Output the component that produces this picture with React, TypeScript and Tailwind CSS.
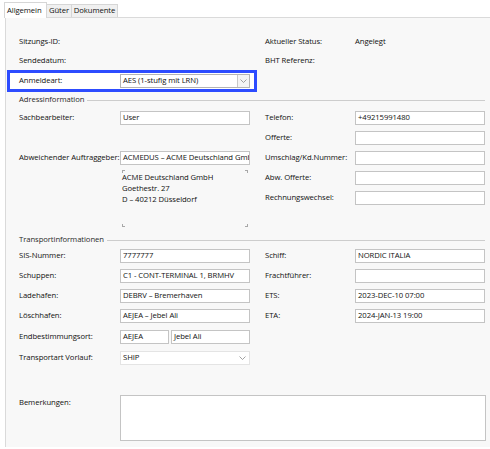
import React from "react";

function Chevron() {
  return (
    <svg width="7" height="4" viewBox="0 0 7 4" className="block">
      <path d="M0.5 0.5 L3.5 3.5 L6.5 0.5" fill="none" stroke="#8a8a8a" strokeWidth="0.8" />
    </svg>
  );
}

function Input({ value = "", w = "w-[130px]" }: { value?: string; w?: string }) {
  return (
    <div className={`h-[14px] ${w} shrink-0 border border-[#c4c4c4] bg-white flex items-center px-[2px] leading-none whitespace-nowrap overflow-hidden`}>
      {value}
    </div>
  );
}

function Row({ label, lw = "w-[101px]", h = "h-[20px]", children }: { label: string; lw?: string; h?: string; children?: React.ReactNode }) {
  return (
    <div className={`flex items-center ${h}`}>
      <div className={`${lw} shrink-0 whitespace-nowrap`}>{label}</div>
      {children}
    </div>
  );
}

function Header({ title, cls = "" }: { title: string; cls?: string }) {
  return (
    <div className={`flex items-center gap-[3px] h-[16px] pr-[5px] text-[#2a2a2a] ${cls}`}>
      <span className="whitespace-nowrap">{title}</span>
      <div className="flex-1 border-t border-[#cdcdcd]" />
    </div>
  );
}

function Corner({ pos }: { pos: string }) {
  return <div className={`absolute w-[3px] h-[3px] border-[#a8a8a8] ${pos}`} />;
}

export default function App() {
  return (
    <div className="w-[490px] h-[449px] bg-white overflow-hidden font-['Open_Sans',sans-serif] text-[7.7px] tracking-[-0.08px] text-[#111111]">
      {/* Tabs */}
      <div className="flex items-end h-[17px] pl-[4px]">
        <div className="h-[16px] w-[43px] bg-white border border-b-0 border-[#d6d6d6] flex items-center pl-[2px] pt-[1px] relative top-[1px] z-10">Allgemein</div>
        <div className="h-[13px] w-[25px] bg-[#f0f0f0] border border-b-0 border-l-0 border-[#d6d6d6] flex items-center justify-center">Güter</div>
        <div className="h-[13px] w-[46px] bg-[#f0f0f0] border border-b-0 border-l-0 border-[#d6d6d6] flex items-center justify-center">Dokumente</div>
      </div>

      {/* Panel */}
      <div className="ml-[5px] h-[430px] bg-[#f8f8f8] border-t border-l border-[#dadada]">
        <div className="pt-[14px]">
          <div className="pl-[13px] flex">
            <div className="w-[246px] shrink-0">
              <Row label="Sitzungs-ID:" h="h-[19px]" />
              <Row label="Sendedatum:" h="h-[19px]" />
            </div>
            <div className="w-[220px]">
              <Row label="Aktueller Status:" lw="w-[90px]" h="h-[19px]">
                <span>Angelegt</span>
              </Row>
              <Row label="BHT Referenz:" lw="w-[90px]" h="h-[19px]" />
            </div>
          </div>

          {/* Highlighted Anmeldeart */}
          <div className="ml-[1px] w-[250px] h-[22px] border-[3px] border-[#2d4cff] bg-white flex items-center pl-[9px]">
            <div className="w-[101px] shrink-0">Anmeldeart:</div>
            <div className="h-[14px] w-[130px] shrink-0 border border-[#b4b4b4] bg-white flex items-center">
              <div className="flex-1 px-[2px] whitespace-nowrap leading-none">AES (1-stufig mit LRN)</div>
              <div className="w-[12px] h-full border-l border-[#c8c8c8] bg-[#f4f4f4] flex items-center justify-center">
                <Chevron />
              </div>
            </div>
          </div>

          <div className="pl-[13px]">
            <Header title="Adressinformation" />
            <div className="flex">
              <div className="w-[246px] shrink-0">
                <Row label="Sachbearbeiter:"><Input value="User" /></Row>
                <div className="h-[20px]" />
                <Row label="Abweichender Auftraggeber:"><Input value="ACMEDUS – ACME Deutschland GmbH" /></Row>
                <div className="h-[62px] pl-[101px]">
                  <div className="relative w-[130px] h-full pl-[2px] pt-[4px] leading-[11px]">
                    <Corner pos="top-[2px] left-[2px] border-t border-l" />
                    <Corner pos="top-[2px] right-[2px] border-t border-r" />
                    <Corner pos="bottom-[3px] left-[2px] border-b border-l" />
                    <Corner pos="bottom-[3px] right-[2px] border-b border-r" />
                    <div>ACME Deutschland GmbH</div>
                    <div>Goethestr. 27</div>
                    <div>D – 40212 Düsseldorf</div>
                  </div>
                </div>
              </div>
              <div className="w-[220px]">
                <Row label="Telefon:" lw="w-[90px]"><Input value="+49215991480" /></Row>
                <Row label="Offerte:" lw="w-[90px]"><Input /></Row>
                <Row label="Umschlag/Kd.Nummer:" lw="w-[90px]"><Input /></Row>
                <Row label="Abw. Offerte:" lw="w-[90px]"><Input /></Row>
                <Row label="Rechnungswechsel:" lw="w-[90px]"><Input /></Row>
              </div>
            </div>

            <Header title="Transportinformationen" cls="pt-[4px]" />
            <div className="flex">
              <div className="w-[246px] shrink-0">
                <Row label="SIS-Nummer:"><Input value="7777777" /></Row>
                <Row label="Schuppen:"><Input value="C1 - CONT-TERMINAL 1, BRMHV" /></Row>
                <Row label="Ladehafen:"><Input value="DEBRV – Bremerhaven" /></Row>
                <Row label="Löschhafen:"><Input value="AEJEA – Jebel Ali" /></Row>
                <Row label="Endbestimmungsort:" h="h-[21px]">
                  <div className="flex gap-[2px]">
                    <Input value="AEJEA" w="w-[49px]" />
                    <Input value="Jebel Ali" w="w-[79px]" />
                  </div>
                </Row>
                <Row label="Transportart Vorlauf:" h="h-[22px]">
                  <div className="h-[14px] w-[130px] border border-[#e4e4e4] bg-white flex items-center pl-[2px] pr-[3px]">
                    <span className="flex-1 leading-none">SHIP</span>
                    <Chevron />
                  </div>
                </Row>
              </div>
              <div className="w-[220px]">
                <Row label="Schiff:" lw="w-[90px]"><Input value="NORDIC ITALIA" /></Row>
                <Row label="Frachtführer:" lw="w-[90px]"><Input /></Row>
                <Row label="ETS:" lw="w-[90px]"><Input value="2023-DEC-10 07:00" /></Row>
                <Row label="ETA:" lw="w-[90px]"><Input value="2024-JAN-13 19:00" /></Row>
              </div>
            </div>

            <div className="flex items-start mt-[26px]">
              <div className="w-[101px] shrink-0 pt-[2px]">Bemerkungen:</div>
              <div className="w-[366px] h-[46px] border border-[#c4c4c4] bg-white" />
            </div>
          </div>
        </div>
      </div>
    </div>
  );
}
